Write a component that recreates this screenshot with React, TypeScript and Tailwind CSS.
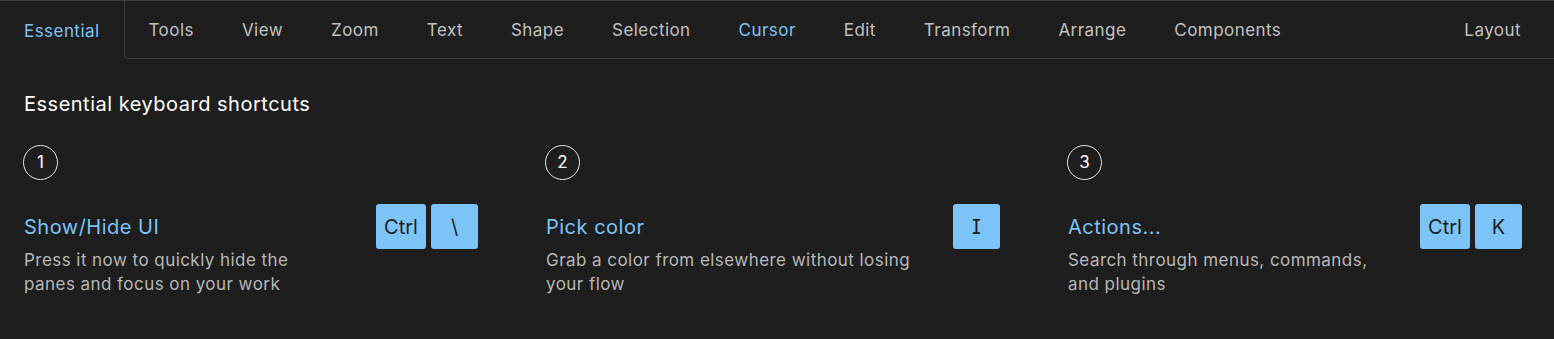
const tabs = ["Tools", "View", "Zoom", "Text", "Shape", "Selection", "Cursor", "Edit", "Transform", "Arrange", "Components"];

const shortcuts = [
  {
    n: 1,
    title: "Show/Hide UI",
    desc: ["Press it now to quickly hide the", "panes and focus on your work"],
    keys: ["Ctrl", "\\"],
  },
  {
    n: 2,
    title: "Pick color",
    desc: ["Grab a color from elsewhere without losing", "your flow"],
    keys: ["I"],
  },
  {
    n: 3,
    title: "Actions...",
    desc: ["Search through menus, commands,", "and plugins"],
    keys: ["Ctrl", "K"],
  },
];

export default function App() {
  return (
    <div className="w-[1554px] h-[339px] bg-[#1e1e1e] border-t border-[#3c3c3c] font-['Inter','Noto_Sans',sans-serif] overflow-hidden">
      <div className="flex h-[58px]">
        <div className="flex items-center pt-[3px] px-6 text-[17px] tracking-[0.45px] text-[#7cc4f8]">Essential</div>
        <div className="flex flex-1 border-l border-b border-[#3c3c3c] rounded-bl-[3px]">
          {tabs.map((t) => (
            <div
              key={t}
              className={`flex items-center pt-[3px] px-6 text-[17px] tracking-[0.45px] ${t === "Cursor" ? "text-[#7cc4f8]" : "text-[#c2c2c2]"}`}
            >
              {t}
            </div>
          ))}
          <div className="ml-auto flex items-center pt-[3px] pl-6 pr-[33px] text-[17px] tracking-[0.45px] text-[#c2c2c2]">Layout</div>
        </div>
      </div>

      <div className="pl-6 pr-8 pt-[31px]">
        <h2 className="text-[20px] leading-[28px] tracking-[0.5px] text-white">Essential keyboard shortcuts</h2>
        <div className="grid grid-cols-3 gap-x-[68px] mt-[27px]">
          {shortcuts.map((s) => (
            <div key={s.n}>
              <div className="w-[35px] h-[35px] -ml-px rounded-full border border-[#e6e6e6] flex items-center justify-center text-[17px] text-white">
                {s.n}
              </div>
              <div className="flex items-start justify-between mt-[24px]">
                <div>
                  <div className="h-[45px] flex items-center text-[20px] tracking-[0.5px] text-[#7cc4f8]">{s.title}</div>
                  <div className="-mt-[1px] text-[17px] leading-[24px] tracking-[0.45px] text-[#b8b8b8]">
                    {s.desc.map((l) => (
                      <div key={l}>{l}</div>
                    ))}
                  </div>
                </div>
                <div className="flex gap-[5px]">
                  {s.keys.map((k) => (
                    <div
                      key={k}
                      className={`h-[45px] ${k === "Ctrl" ? "w-[50px]" : "w-[47px]"} rounded-[3px] bg-[#7cc4f8] flex items-center justify-center text-[20px] text-[#1e1e1e] [font-feature-settings:'cv08']`}
                    >
                      {k}
                    </div>
                  ))}
                </div>
              </div>
            </div>
          ))}
        </div>
      </div>
    </div>
  );
}
